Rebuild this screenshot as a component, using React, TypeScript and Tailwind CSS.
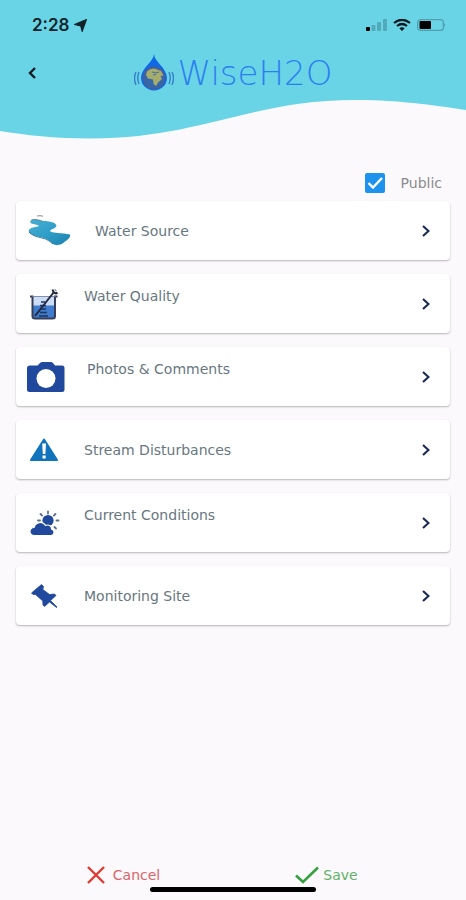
import type { ReactNode } from "react";

const NAVY = "#20489c";

function WaterSourceIcon() {
  return (
    <svg className="h-8 w-[43px] shrink-0" viewBox="0 0 43 32" aria-hidden="true">
      <defs>
        <linearGradient id="stream" x1="0" y1="0" x2="1" y2="1">
          <stop offset="0" stopColor="#4aaed2" />
          <stop offset="0.5" stopColor="#2f9fc9" />
          <stop offset="1" stopColor="#1b7fae" />
        </linearGradient>
      </defs>
      <path d="M9 1.300q3-1.600 6 .2" fill="none" stroke="#a9aaa8" strokeWidth="1.200" />
      <path
        d="M3 5.500C5 3.500 8 4 11 5C15 6.500 20 5.500 25 7.500C30 9.500 29.500 12.500 23.500 14.500C21 15.500 22 17 26 17.500C31 18 36 18.500 42 19.500C43 22 40 24.500 37 26.500C33 30.500 28 31 24.500 28.500C22 26 19 23.500 14 22.500C8 21.500 2 19.500 .7 16.500C.5 13 5 12.500 10 11.500C12.500 10.500 8 9.500 5 9C2.500 8.500 1.500 7 3 5.500Z"
        fill="url(#stream)"
      />
      <path d="M1 17C4 20.500 9 22 14 23C19 24 22 26.500 25 29" fill="none" stroke="#17688f" strokeWidth="0.800" />
      <path d="M3 5.300C6 3.500 10 5 14 6" fill="none" stroke="#536f7c" strokeWidth="0.700" />
    </svg>
  );
}

function WaterQualityIcon() {
  return (
    <svg className="h-8 w-8 shrink-0" viewBox="0 0 32 32" aria-hidden="true">
      <path d="M5 9h22v20H5z" fill="#cbdcf7" />
      <path d="M5 17.500h22V28q0 2-2 2H7q-2 0-2-2z" fill="#3f7ccd" />
      <path d="M2 8.500h2.500V28q0 2.500 2.500 2.500h17.500q2.500 0 2.500-2.500V8.500h2.500" fill="none" stroke="#363d58" strokeWidth="2" />
      <path d="M4 8.500h24" stroke="#68718f" strokeWidth="0.800" />
      <path d="M13 14h4M12 17.500h6M12 21h6M12 24.500h7M11 28h9" stroke="#1f3560" strokeWidth="1.600" />
      <path d="M7 28L26 4" stroke="#23283c" strokeWidth="2" />
      <path d="M24.500 1.500l1 2.500 2.500 1.500 1.500-1" fill="none" stroke="#23283c" strokeWidth="2" />
      <path d="M26.500 1.500l2 1.500" stroke="#8b91a4" strokeWidth="1.500" />
    </svg>
  );
}

function CameraIcon() {
  return (
    <svg className="h-8 w-[35px] shrink-0 overflow-visible" viewBox="0 0 35 32" aria-hidden="true">
      <path
        d="M2 4.500H9.500L12 2Q13 1 14.500 1H22.500Q24 1 25 2L27 4.500H34Q36.500 4.500 36.500 7V28.500Q36.500 31 34 31H1.500Q-1 31-1 28.500V7Q-1 4.500 2 4.500Z"
        fill={NAVY}
      />
      <circle cx="18" cy="17.500" r="9.500" fill="#fff" />
    </svg>
  );
}

function WarningIcon() {
  return (
    <svg className="h-8 w-8 shrink-0" viewBox="0 0 32 32" aria-hidden="true">
      <path d="M16 5.500L29 26H3Z" fill="#1273bd" stroke="#1273bd" strokeWidth="2" strokeLinejoin="round" />
      <path d="M14.200 9.500h3.800l-.6 10.500h-2.600z" fill="#fff" />
      <rect x="14.500" y="21.500" width="3.200" height="3" fill="#fff" />
    </svg>
  );
}

function WeatherIcon() {
  return (
    <svg className="h-8 w-8 shrink-0" viewBox="0 0 32 32" aria-hidden="true">
      <circle cx="20" cy="13.500" r="5.600" fill={NAVY} />
      <path
        d="M20 4.500v2M12.500 7l1.600 1.600M27.500 7l-1.600 1.600M10 13.500h2M28.500 13.500h2M26.500 20l1.500 1.500"
        stroke="#5a708f"
        strokeWidth="1.800"
        strokeLinecap="round"
      />
      <path
        d="M6.500 28.500C.5 28.500.5 20.500 6 20.500C7.500 14.500 15 14 17.500 18.500C21 17 24 19.500 23.500 22C27.500 23.500 26.500 28.500 23 28.500Z"
        fill={NAVY}
        stroke="#fff"
        strokeWidth="1.200"
      />
    </svg>
  );
}

function PinIcon() {
  return (
    <svg className="h-8 w-8 shrink-0" viewBox="0 0 32 32" aria-hidden="true">
      <path
        d="M13.500 4.500L15.500 6.500L14.800 9.500L21.500 14.500L26.500 14L28 15.500L22.500 20.500L29 27L28.500 27.500L21.500 22L16.500 26.500L15 25L14.800 21L7.500 14.500L5 14.500L3.500 13Z"
        fill={NAVY}
        stroke={NAVY}
        strokeWidth="0.800"
        strokeLinejoin="round"
      />
    </svg>
  );
}

function Chevron() {
  return (
    <svg className="h-3 w-2 shrink-0" viewBox="0 0 8 12" fill="none" aria-hidden="true">
      <path d="M1 1l5.500 5L1 11" stroke="#1d2c55" strokeWidth="2.200" />
    </svg>
  );
}

function Logo() {
  return (
    <svg className="h-10 w-10 shrink-0" viewBox="0 0 40 40" fill="none" aria-hidden="true">
      <path d="M20 1C20.500 9 33 15 33 25A13 12.500 0 0 1 7 25C7 15 19.500 9 20 1Z" fill="#1268e4" />
      <circle cx="20" cy="25" r="10.500" fill="#3467ab" stroke="#4e5f8c" strokeWidth="1.400" />
      <path
        d="M13 18.500Q17 14.500 22 16L27 18L29.500 22.500L26.500 23L28 26L24.500 29L22 33L19.500 31L19 26.500L14 25.500L12 22Z"
        fill="#a6ac6c"
      />
      <path d="M18 19l4 1 3-1M19 22l3-.5" stroke="#416fa2" strokeWidth="1" />
      <path
        d="M5 19Q2.500 25 5 31M2 19Q-1 25 2 32M35 19Q37.500 25 35 31M38 19Q41 25 38 32"
        stroke="#377fc9"
        strokeWidth="1.400"
      />
    </svg>
  );
}

type Item = { label: string; icon: ReactNode; raised?: boolean };

const items: Item[] = [
  { label: "Water Source", icon: <WaterSourceIcon /> },
  { label: "Water Quality", icon: <WaterQualityIcon />, raised: true },
  { label: "Photos & Comments", icon: <CameraIcon />, raised: true },
  { label: "Stream Disturbances", icon: <WarningIcon /> },
  { label: "Current Conditions", icon: <WeatherIcon />, raised: true },
  { label: "Monitoring Site", icon: <PinIcon /> },
];

function StatusBar() {
  return (
    <div className="flex h-6 items-center justify-between pl-8 pr-5">
      <div className="flex items-center gap-1 font-['Inter',sans-serif] text-[17px] font-semibold leading-6 text-[#10242a]">
        <span>2:28</span>
        <svg className="h-[13px] w-[13px]" viewBox="0 0 12 12" aria-hidden="true">
          <path d="M11.500.5L7.500 11.500L6.200 6.500L.5 5Z" fill="#10242a" stroke="#10242a" strokeLinejoin="round" />
        </svg>
      </div>
      <div className="flex items-center gap-1.5">
        <svg className="h-3 w-[21px]" viewBox="0 0 21 12" aria-hidden="true">
          <rect x="0" y="8" width="4" height="4" rx="1" fill="#000" />
          <rect x="5.500" y="6" width="4" height="6" rx="1" fill="#52a9b9" />
          <rect x="11" y="3" width="4" height="9" rx="1" fill="#52a9b9" />
          <rect x="17" y="0" width="4" height="12" rx="1" fill="#52a9b9" />
        </svg>
        <svg className="h-3 w-[18px]" viewBox="0 0 18 12" fill="none" aria-hidden="true">
          <path d="M1 4Q9-2.500 17 4" stroke="#0a1a1e" strokeWidth="2.200" />
          <path d="M4 7Q9 3 14 7" stroke="#0a1a1e" strokeWidth="2.200" />
          <path d="M6.300 9.300Q9 7.200 11.700 9.300L9 12Z" fill="#0a1a1e" />
        </svg>
        <svg className="h-3 w-[29px]" viewBox="0 0 29 12" fill="none" aria-hidden="true">
          <rect x=".6" y=".6" width="25.800" height="10.800" rx="3" stroke="#4f9fae" strokeWidth="1.200" />
          <rect x="2.500" y="2" width="11.500" height="8" rx="1" fill="#000" />
          <path d="M27.500 4q1.500 2 0 4z" fill="#387b88" />
        </svg>
      </div>
    </div>
  );
}

export default function App() {
  return (
    <div className="flex min-h-screen flex-col bg-[#fbf9fb] font-['DejaVu_Sans',sans-serif] text-sm text-[#68777f]">
      <header className="relative h-[139px] pt-[13px]">
        <svg className="absolute inset-0 h-full w-full" viewBox="0 0 466 139" preserveAspectRatio="none" aria-hidden="true">
          <path d="M0 0H466V110C420 103 390 100 355 100C250 100 200 138.500 90 138.500C55 138.500 25 135 0 131Z" fill="#6ad4e7" />
        </svg>
        <div className="relative">
          <StatusBar />
          <div className="mt-4 grid grid-cols-[1fr_auto_1fr] items-center">
            <button type="button" aria-label="Back" className="ml-6 flex h-8 w-8 items-center pl-1">
              <svg className="h-3 w-2" viewBox="0 0 8 12" fill="none" aria-hidden="true">
                <path d="M7 1L2 6l5 5" stroke="#0e1d22" strokeWidth="2.400" />
              </svg>
            </button>
            <div className="flex items-center gap-1">
              <Logo />
              <h1 className="font-['DejaVu_Sans_Light','DejaVu_Sans',sans-serif] text-[34px] font-extralight leading-10 text-[#2a80ee]">
                WiseH2O
              </h1>
            </div>
          </div>
        </div>
      </header>

      <main className="px-4 pb-8 pt-[33px]">
        <div className="flex h-[22px] items-center justify-end pr-2">
          <label className="flex items-center gap-4 text-[#8b8b8f]">
            <span className="relative flex">
              <input
                type="checkbox"
                defaultChecked
                className="peer h-5 w-5 appearance-none rounded-xs border-2 border-[#1e93ee] checked:bg-[#1e93ee]"
              />
              <svg
                className="pointer-events-none absolute inset-0 hidden h-5 w-5 peer-checked:block"
                viewBox="0 0 20 20"
                fill="none"
                aria-hidden="true"
              >
                <path d="M3.500 10L8 14.500L17 5" stroke="#fff" strokeWidth="2.400" />
              </svg>
            </span>
            Public
          </label>
        </div>

        <nav className="mt-[7px] flex flex-col gap-[14px]">
          {items.map((item) => (
            <button
              key={item.label}
              type="button"
              className="flex h-[59px] items-center gap-6 rounded-sm bg-white pl-3 pr-5 text-left shadow-[0_1px_2px_rgba(0,0,0,0.28)]"
            >
              {item.icon}
              <span className={item.raised ? "flex-1 pb-4" : "flex-1"}>{item.label}</span>
              <Chevron />
            </button>
          ))}
        </nav>
      </main>

      <footer className="mt-auto pb-2">
        <div className="grid grid-cols-2 justify-items-center pl-[22px] pr-[38px]">
          <button type="button" className="flex items-center gap-2 leading-5 text-[#dd6468]">
            <svg className="h-[18px] w-[18px]" viewBox="0 0 18 18" fill="none" aria-hidden="true">
              <path d="M1 1l16 16M17 1L1 17" stroke="#df3b32" strokeWidth="2.400" />
            </svg>
            Cancel
          </button>
          <button type="button" className="flex items-center gap-1 leading-5 text-[#62b168]">
            <svg className="h-[18px] w-6" viewBox="0 0 24 18" fill="none" aria-hidden="true">
              <path d="M1 9.500L8 16L23 1.500" stroke="#36a041" strokeWidth="2.600" />
            </svg>
            Save
          </button>
        </div>
        <div className="mx-auto mt-0.5 h-[5px] w-[166px] rounded-full bg-black" />
      </footer>
    </div>
  );
}
